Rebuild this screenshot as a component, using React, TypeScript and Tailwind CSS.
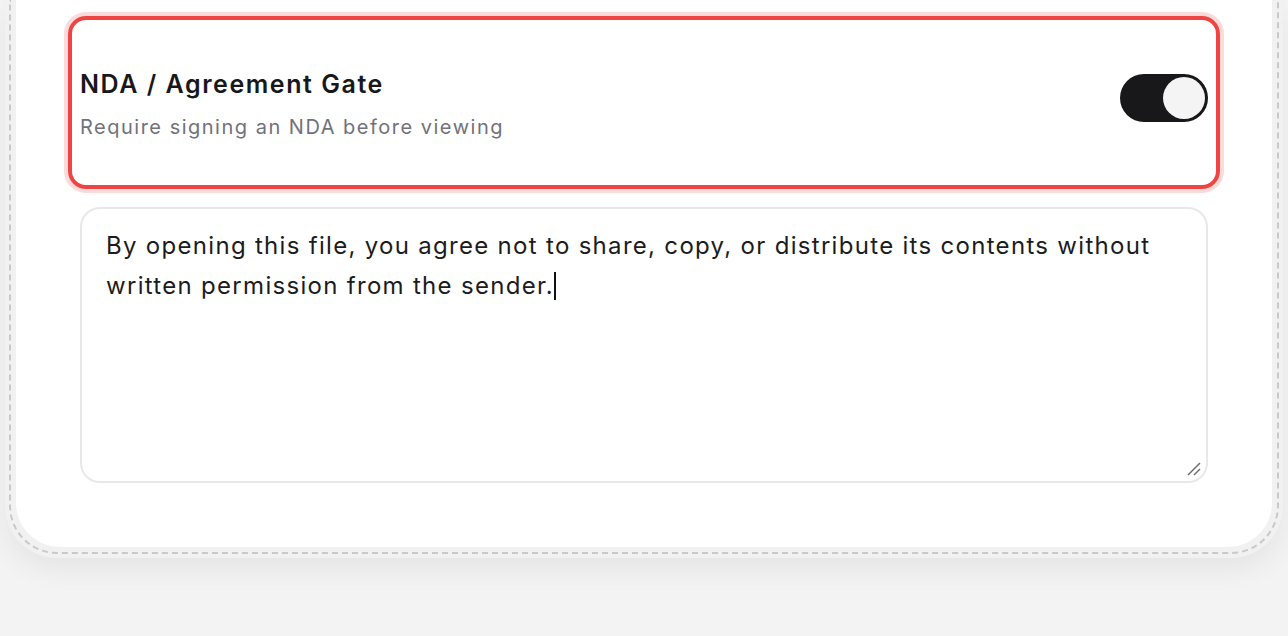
import { useState } from "react";

export default function App() {
  const [enabled, setEnabled] = useState(true);

  return (
    <div
      className="min-h-screen bg-[#f3f3f3] px-[5px] pb-10"
      style={{ fontFamily: "Inter, 'Noto Sans', sans-serif" }}
    >
      {/* outer shell with dashed stitch */}
      <div className="rounded-b-[52px] bg-[#f1f1f2] px-[4px] pb-[4px] shadow-[0_12px_28px_rgba(0,0,0,0.06)]">
        <div className="rounded-b-[48px] border-2 border-t-0 border-dashed border-[#c9c9cd] px-[5px] pb-[5px]">
          <div className="rounded-b-[44px] bg-white px-16 pt-4 pb-16">
            {/* highlighted setting row */}
            <div className="-mx-3 rounded-[18px] border-4 border-[#ef4444] px-2 pt-[48px] pb-[44px] ring-4 ring-[#ef4444]/20">
              <div className="flex items-start justify-between">
                <div>
                  <h3 className="text-[25px] leading-8 font-semibold tracking-[1.55px] text-[#18181b]">
                    NDA / Agreement Gate
                  </h3>
                  <p className="mt-[13px] text-[20px] leading-7 tracking-[1.5px] text-[#71717a]">
                    Require signing an NDA before viewing
                  </p>
                </div>
                <button
                  type="button"
                  onClick={() => setEnabled(!enabled)}
                  className={`mt-1.5 flex h-12 w-[88px] items-center rounded-full px-[3px] ${
                    enabled ? "justify-end bg-[#18181b]" : "justify-start bg-[#e4e4e7]"
                  }`}
                >
                  <span className="h-[42px] w-[42px] rounded-full bg-[#f4f4f5]" />
                </button>
              </div>
            </div>

            {/* agreement text */}
            <div className="relative mt-[18px] h-[276px] rounded-[20px] border-2 border-[#e8e8e8] px-6 pt-[17px]">
              <p className="text-[24px] leading-10 tracking-[1.3px] text-[#1c1c1c]">
                By opening this file, you agree not to share, copy, or distribute its contents without
                written permission from the sender.
                <span className="inline-block h-7 w-[1.5px] bg-[#111] align-[-6px]" />
              </p>
              <svg
                className="absolute right-[5px] bottom-[5px]"
                width="14"
                height="14"
                viewBox="0 0 14 14"
              >
                <path d="M1 13L13 1" stroke="#6b6b6b" strokeWidth="1.5" />
                <path d="M7 13L13 7" stroke="#6b6b6b" strokeWidth="1.5" />
              </svg>
            </div>
          </div>
        </div>
      </div>
    </div>
  );
}
